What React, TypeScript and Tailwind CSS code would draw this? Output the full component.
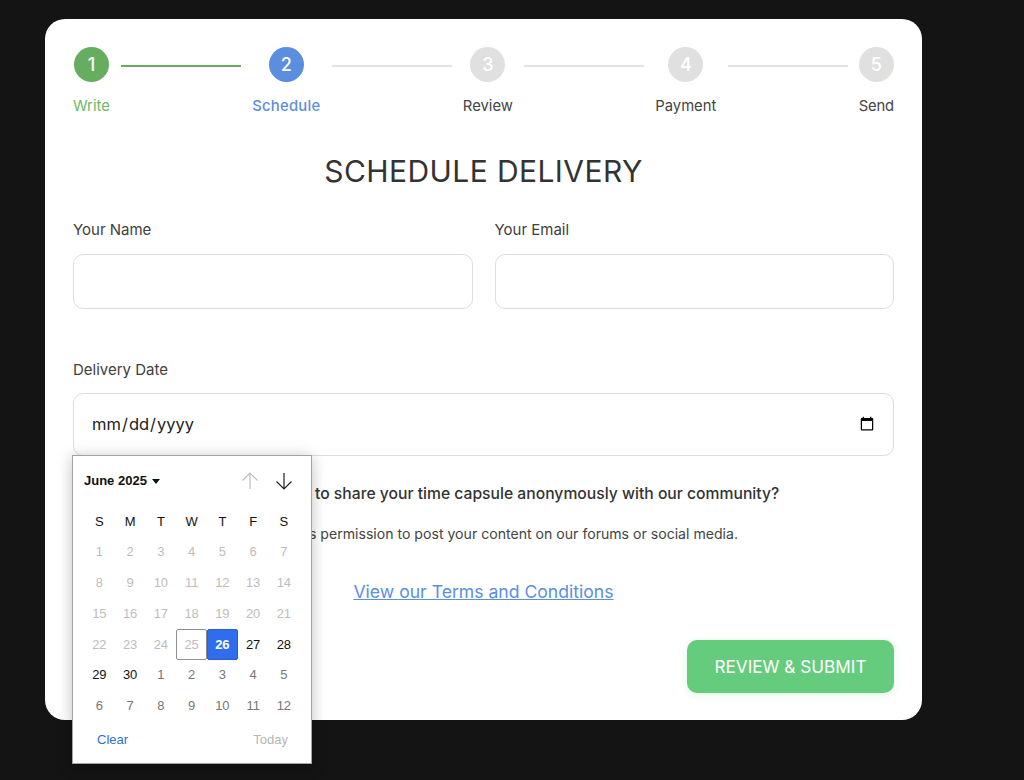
import React from "react";

const steps = [
  { n: 1, label: "Write", circle: "bg-[#66ad5f]", text: "text-[#6cb966]" },
  { n: 2, label: "Schedule", circle: "bg-[#5b8ede]", text: "text-[#5b8ede] font-medium tracking-[0.25px]" },
  { n: 3, label: "Review", circle: "bg-[#e0e0e0]", text: "text-[#444444]" },
  { n: 4, label: "Payment", circle: "bg-[#e0e0e0]", text: "text-[#444444]" },
  { n: 5, label: "Send", circle: "bg-[#e0e0e0]", text: "text-[#444444] tracking-[-0.2px]" },
];

type Day = { d: number; tone: "off" | "on" | "next" };

const days: Day[] = [
  ...Array.from({ length: 24 }, (_, i): Day => ({ d: i + 1, tone: "off" })),
  { d: 25, tone: "off" },
  { d: 26, tone: "on" },
  { d: 27, tone: "on" },
  { d: 28, tone: "on" },
  { d: 29, tone: "on" },
  { d: 30, tone: "on" },
  ...Array.from({ length: 12 }, (_, i): Day => ({ d: i + 1, tone: "next" })),
];

function Stepper() {
  return (
    <div className="flex items-start justify-between">
      {steps.map((s, i) => (
        <React.Fragment key={s.n}>
          <div className="flex flex-col items-center">
            <div
              className={`flex h-[35px] w-[35px] items-center justify-center rounded-full text-lg font-medium text-white ${s.circle}`}
            >
              {s.n}
            </div>
            <span className={`mt-[14px] text-[14.8px] leading-[20px] whitespace-nowrap ${s.text}`}>
              {s.label}
            </span>
          </div>
          {i < steps.length - 1 && (
            <div className={`mt-[18px] h-[2px] w-[120px] ${i === 0 ? "bg-[#66ad5f]" : "bg-[#e3e3e3]"}`} />
          )}
        </React.Fragment>
      ))}
    </div>
  );
}

function Calendar() {
  return (
    <div className="absolute top-[62px] left-[-1px] z-10 h-[309px] w-[240px] border border-[#a3a3a3] bg-white px-[11px] font-['Liberation_Sans',Arial,sans-serif] shadow-[0_2px_14px_rgba(0,0,0,0.25)]">
      <div className="flex h-[50px] items-center justify-between">
        <div className="flex items-center gap-[5px] text-[13px] font-bold text-[#111111]">
          June 2025
          <svg width="8" height="5" viewBox="0 0 8 5">
            <path d="M0 0h8L4 5z" fill="#111111" />
          </svg>
        </div>
        <div className="mr-[7px] flex items-center gap-[16px]">
          <svg width="18" height="18" viewBox="0 0 18 18" fill="none" stroke="#bdbdbd" strokeWidth="1.2">
            <path d="M9 17V1M1.5 8.5 9 1l7.5 7.5" />
          </svg>
          <svg width="18" height="18" viewBox="0 0 18 18" fill="none" stroke="#222222" strokeWidth="1.2">
            <path d="M9 1v16M1.5 9.5 9 17l7.5-7.5" />
          </svg>
        </div>
      </div>
      <div className="grid grid-cols-[repeat(7,30.75px)] auto-rows-[30.75px] items-center text-center text-[13px]">
        {["S", "M", "T", "W", "T", "F", "S"].map((d, i) => (
          <div key={i} className="font-medium text-[#111111]">
            {d}
          </div>
        ))}
        {days.map((day, i) => {
          if (day.d === 25) {
            return (
              <div key={i} className="flex h-full items-center justify-center rounded-[2px] border border-[#8f8f8f] text-[#bdbdbd]">
                25
              </div>
            );
          }
          if (day.d === 26 && day.tone === "on") {
            return (
              <div key={i} className="flex h-full items-center justify-center rounded-[2px] border border-[#2a5fc4] bg-[#2f6ded] font-bold text-white">
                26
              </div>
            );
          }
          const color =
            day.tone === "off" ? "text-[#bdbdbd]" : day.tone === "on" ? "font-medium text-[#111111]" : "text-[#777777]";
          return (
            <div key={i} className={color}>
              {day.d}
            </div>
          );
        })}
      </div>
      <div className="mt-[9px] flex items-center justify-between pr-[12px] pl-[13px] text-[13px] leading-[20px]">
        <span className="text-[#2f6fd6]">Clear</span>
        <span className="text-[#b5b5b5]">Today</span>
      </div>
    </div>
  );
}

export default function App() {
  return (
    <div className="h-[780px] overflow-hidden bg-[#141414] pt-[19px] pl-[45px] font-['Inter',sans-serif]">
      <div className="h-[701px] w-[877px] rounded-[20px] bg-white px-[28px] pt-[28px]">
        <Stepper />
        <h1 className="mt-[35px] text-center text-[30px] leading-[40px] font-normal tracking-[0.42px] text-[#333333]">
          SCHEDULE DELIVERY
        </h1>
        <div className="mt-[28px] grid grid-cols-2 gap-[22px]">
          <div>
            <label className="block text-[15px] leading-[22px] text-[#404040]">Your Name</label>
            <input className="mt-[13px] block h-[55px] w-full rounded-[10px] border border-[#dddddd]" />
          </div>
          <div>
            <label className="block text-[15px] leading-[22px] text-[#404040]">Your Email</label>
            <input className="mt-[13px] block h-[55px] w-full rounded-[10px] border border-[#dddddd]" />
          </div>
        </div>
        <div className="mt-[50px]">
          <label className="block text-[15px] leading-[22px] text-[#404040]">Delivery Date</label>
          <div className="relative mt-[12px]">
            <input
              type="date"
              className="block h-[63px] w-full rounded-[10px] border border-[#dddddd] pr-[16px] pl-[17px] text-[16.5px] text-[#222222]"
            />
            <Calendar />
          </div>
        </div>
        <p className="mt-[27px] pl-[14px] text-center text-[15.7px] leading-[22px] font-medium text-[#333333]">
          Would you like to share your time capsule anonymously with our community?
        </p>
        <p className="mt-[18px] text-center text-[14.1px] leading-[22px] text-[#444444]">
          This gives us permission to post your content on our forums or social media.
        </p>
        <div className="mt-[34px] text-center">
          <a className="text-[17.6px] leading-[26px] text-[#5b8ede] underline">View our Terms and Conditions</a>
        </div>
        <div className="mt-[35px] flex justify-end">
          <button className="h-[53px] w-[207px] rounded-[10px] bg-[#66cc7d] text-[17.2px] text-white shadow-[0_2px_8px_rgba(102,204,125,0.2)]">
            REVIEW &amp; SUBMIT
          </button>
        </div>
      </div>
    </div>
  );
}
